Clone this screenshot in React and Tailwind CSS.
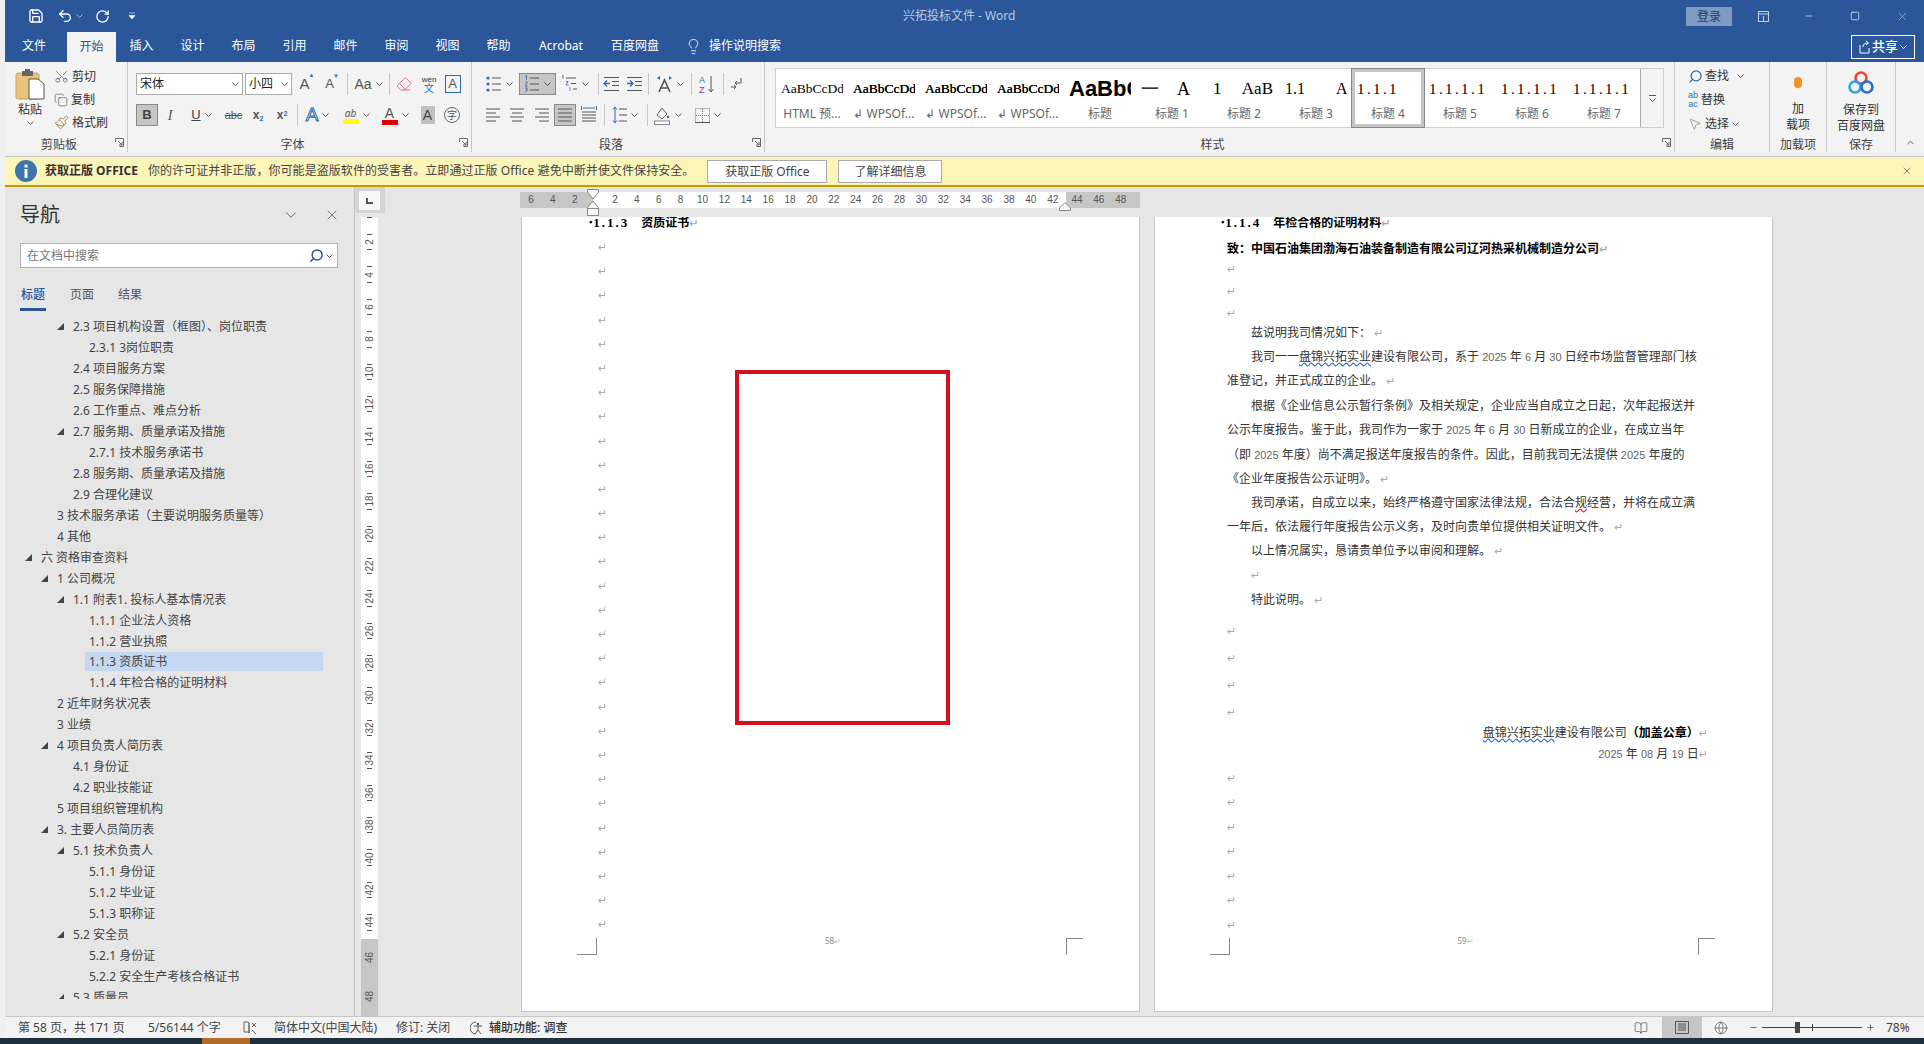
import React from 'react';
import { Save, Undo2, RotateCw, Lightbulb, Scissors, Copy, Paintbrush, ChevronDown, ChevronUp, X, Search, Minus, Plus, Square, Eraser, MousePointer2, BookOpen, Globe } from 'lucide-react';

const Chev = ({ c = 'text-[#555]' }) => (
  <svg width="7" height="4" viewBox="0 0 7 4" className={c}><path d="M0.5 0.5 L3.5 3.5 L6.5 0.5" fill="none" stroke="currentColor" strokeWidth="1" /></svg>
);
const Launcher = () => (
  <svg width="9" height="9" viewBox="0 0 9 9" className="absolute right-[3px] top-[4px] text-[#666]">
    <path d="M0.5 4V0.5H8.5V8.5H4.5M3 3L7 7M7 4V7H4" fill="none" stroke="currentColor" strokeWidth="1" />
  </svg>
);
const Sep = ({ m = 'mx-[2px]' }) => <div className={`w-px h-[22px] bg-[#c6c6c6] shrink-0 ${m}`} />;
const Cell = ({ w, sel, children }) => (
  <div className={`${w} h-[22px] shrink-0 flex items-center justify-center gap-[4px] ${sel ? 'bg-[#c6c6c6] border border-[#8a8a8a]' : ''}`}>{children}</div>
);

const Lines = ({ kind }) => {
  const rows = {
    left: ['M1 2H15', 'M1 6H11', 'M1 10H15', 'M1 14H11'],
    center: ['M1 2H15', 'M3 6H13', 'M1 10H15', 'M3 14H13'],
    right: ['M1 2H15', 'M5 6H15', 'M1 10H15', 'M5 14H15'],
    just: ['M1 2H15', 'M1 6H15', 'M1 10H15', 'M1 14H15'],
  }[kind];
  return <svg width="16" height="16" viewBox="0 0 16 16"><path d={rows.join('')} stroke="#555" fill="none" /></svg>;
};
const Bullets = () => (
  <svg width="16" height="18" viewBox="0 0 16 18"><g fill="#2b6cb0"><circle cx="2" cy="3" r="1.6" /><circle cx="2" cy="9" r="1.6" /><circle cx="2" cy="15" r="1.6" /></g><path d="M6 3H15M6 9H15M6 15H15" stroke="#555" /></svg>
);
const Numbered = () => (
  <svg width="16" height="18" viewBox="0 0 16 18"><path d="M1 1.5L2.5 .5V5M1 7H3.5L1 11H4M1 13H3.5L2 15H3.5L1 17.5" stroke="#2b6cb0" fill="none" strokeWidth=".8" /><path d="M6 3H15M6 9H15M6 15H15" stroke="#555" /></svg>
);
const Multi = () => (
  <svg width="17" height="18" viewBox="0 0 17 18"><path d="M1 1L2 .5V4M5 6.5H7L5 10H7.5M9 12V16" stroke="#2b6cb0" fill="none" strokeWidth=".8" /><path d="M5 3H15M10 8.5H15M12 14H16" stroke="#555" /></svg>
);
const Indent = ({ out }) => (
  <svg width="17" height="16" viewBox="0 0 17 16"><path d="M1 1.5H16M9 5.5H16M9 9.5H16M1 14.5H16" stroke="#555" fill="none" /><path d={out ? 'M7 7.5H1M4 4.5L1 7.5L4 10.5' : 'M1 7.5H7M4 4.5L7 7.5L4 10.5'} stroke="#2b6cb0" fill="none" strokeWidth="1.3" /></svg>
);
const TextDir = () => (
  <svg width="17" height="18" viewBox="0 0 17 18"><path d="M3 17L8.5 5L14 17M5 13H12" stroke="#555" fill="none" strokeWidth="1.6" /><path d="M1 3L4 1V5ZM16 3L13 1V5Z" fill="#2b6cb0" /></svg>
);
const Sort = () => (
  <svg width="17" height="20" viewBox="0 0 17 20"><text x="0" y="9" fontSize="9" fill="#2b6cb0" fontFamily="Liberation Sans">A</text><text x="0" y="19" fontSize="9" fill="#7b3fa0" fontFamily="Liberation Sans">Z</text><path d="M12 2V18M9.5 15L12 18L14.5 15" stroke="#555" fill="none" /></svg>
);
const ParaMark = () => (
  <svg width="14" height="16" viewBox="0 0 14 16"><path d="M11 2V7H5M7 5L5 7L7 9" stroke="#555" fill="none" /><path d="M1 11H6M4 9L6 11L4 13" stroke="#555" fill="none" /></svg>
);
const Dist = () => (
  <svg width="16" height="18" viewBox="0 0 16 18"><path d="M1 6H15M1 9H15M1 12H15M1 15H15" stroke="#555" fill="none" /><path d="M.5 0V4M15.5 0V4M2 2H14" stroke="#2b6cb0" fill="none" /></svg>
);
const Spacing = () => (
  <svg width="15" height="18" viewBox="0 0 15 18"><path d="M3 1V17M1 3.5L3 1L5 3.5M1 14.5L3 17L5 14.5" stroke="#2b6cb0" fill="none" /><path d="M7 3H15M7 9H15M7 15H15" stroke="#555" /></svg>
);
const Shading = () => (
  <svg width="17" height="19" viewBox="0 0 17 19"><path d="M3 9L8 2L13 8L8 13Z" fill="none" stroke="#666" /><circle cx="14" cy="11" r="1.2" fill="#2b6cb0" /><rect x=".5" y="15" width="15" height="3.5" fill="#fff" stroke="#888" /></svg>
);
const Borders = () => (
  <svg width="15" height="15" viewBox="0 0 15 15"><rect x=".5" y=".5" width="14" height="14" fill="none" stroke="#777" strokeDasharray="1 1" /><path d="M7.5 1V14M1 7.5H14" stroke="#777" strokeDasharray="1 1" /><path d="M0 14.5H15" stroke="#555" /></svg>
);
const Paste = () => (
  <svg width="30" height="31" viewBox="0 0 30 31">
    <rect x="1" y="4" width="23" height="26" rx="2" fill="#eac47c" stroke="#c9a25f" />
    <rect x="7" y="2" width="11" height="5" fill="#666" />
    <rect x="10" y="0" width="5" height="3" fill="#666" />
    <path d="M14 10H23L29 15V30H14Z" fill="#fff" stroke="#555" />
  </svg>
);
const G = ({ w, label, children, launcher }) => (
  <div className={`${w} shrink-0 flex flex-col border-r border-[#c6c6c6] h-[90px]`}>
    <div className="flex-1 min-h-0">{children}</div>
    <div className={`relative h-[18px] leading-[22px] text-center text-[12px] text-[#444] ${launcher ? 'pr-[14px]' : ''}`}>{label}{launcher && <Launcher />}</div>
  </div>
);

const styles = [
  ['AaBbCcDdEe', 'HTML 预...', 'text-[13.5px] font-["Liberation_Serif"]', false],
  ['AaBbCcDdEe', '↲ WPSOf...', 'text-[13.5px] font-["Liberation_Serif"] [text-shadow:0_0_0.5px_#000]'],
  ['AaBbCcDdEe', '↲ WPSOf...', 'text-[13.5px] font-["Liberation_Serif"] [text-shadow:0_0_0.5px_#000]'],
  ['AaBbCcDdEe', '↲ WPSOf...', 'text-[13.5px] font-["Liberation_Serif"] [text-shadow:0_0_0.5px_#000]'],
  ['AaBbCc', '标题', 'text-[22px] font-bold font-["Liberation_Sans"]'],
  ['一    A', '标题 1', 'text-[18px] font-["Liberation_Serif"]'],
  ['1     AaB', '标题 2', 'text-[17px] font-["Liberation_Serif"]'],
  ['1.1        A', '标题 3', 'text-[16px] font-["Liberation_Serif"]'],
  ['1.1.1', '标题 4', 'text-[15px] font-["Liberation_Serif"] tracking-[2.4px]', true],
  ['1.1.1.1', '标题 5', 'text-[15px] font-["Liberation_Serif"] tracking-[2.4px]'],
  ['1.1.1.1', '标题 6', 'text-[15px] font-["Liberation_Serif"] tracking-[2.4px]'],
  ['1.1.1.1', '标题 7', 'text-[15px] font-["Liberation_Serif"] tracking-[2.4px]'],
];

const tree = [
  [3, '2.3 项目机构设置（框图）、岗位职责', 1], [4, '2.3.1 3岗位职责'], [3, '2.4 项目服务方案'], [3, '2.5 服务保障措施'], [3, '2.6 工作重点、难点分析'],
  [3, '2.7 服务期、质量承诺及措施', 1], [4, '2.7.1 技术服务承诺书'], [3, '2.8 服务期、质量承诺及措施'], [3, '2.9 合理化建议'],
  [2, '3 技术服务承诺（主要说明服务质量等）'], [2, '4 其他'], [1, '六 资格审查资料', 1], [2, '1 公司概况', 1], [3, '1.1 附表1. 投标人基本情况表', 1],
  [4, '1.1.1 企业法人资格'], [4, '1.1.2 营业执照'], [4, '1.1.3 资质证书', 0, 1], [4, '1.1.4 年检合格的证明材料'], [2, '2 近年财务状况表'], [2, '3 业绩'],
  [2, '4 项目负责人简历表', 1], [3, '4.1 身份证'], [3, '4.2 职业技能证'], [2, '5 项目组织管理机构'], [2, '3. 主要人员简历表', 1], [3, '5.1 技术负责人', 1],
  [4, '5.1.1 身份证'], [4, '5.1.2 毕业证'], [4, '5.1.3 职称证'], [3, '5.2 安全员', 1], [4, '5.2.1 身份证'], [4, '5.2.2 安全生产考核合格证书'], [3, '5.3 质量员', 1],
];
const lvl = { 1: 'pl-[20px]', 2: 'pl-[36px]', 3: 'pl-[52px]', 4: 'pl-[68px]' };

const Mk = () => <span className="text-[11px] text-[#aaa] font-['DejaVu_Sans']">↵</span>;
const Num = ({ children }) => <span className="text-[#666] font-['Liberation_Sans'] text-[11px]">{children}</span>;

const CornerL = ({ w }) => <div className={`${w} h-[17px] mt-px border-[#888] border-r border-b`} />;
const CornerR = () => <div className="w-[17px] h-[17px] mt-px border-[#888] border-l border-t" />;

const Row = ({ m, indent, right, bold, children }) => (
  <div className={`h-[20px] leading-[20px] whitespace-nowrap ${m} ${indent ? 'pl-[24px]' : ''} ${right ? 'text-right -mr-[14px]' : ''} ${bold ? 'font-bold' : ''}`}>{children}</div>
);

const hrLeft = [6, 4, 2];
const hrRight = [2, 4, 6, 8, 10, 12, 14, 16, 18, 20, 22, 24, 26, 28, 30, 32, 34, 36, 38, 40, 42];
const hrRight2 = [44, 46, 48];
const vr = [2, 4, 6, 8, 10, 12, 14, 16, 18, 20, 22, 24, 26, 28, 30, 32, 34, 36, 38, 40, 42, 44];

export default function App() {
  return (
    <div className="w-[1924px] h-[1044px] overflow-hidden flex flex-col bg-[#f0f0f0] text-[12px] text-[#444] font-['Noto_Sans','Noto_Sans_CJK_SC',sans-serif]">
      <div className="flex-1 min-h-0 flex flex-col pl-[5px]">
        {/* title */}
        <div className="h-[62px] shrink-0 bg-[#2b579a] text-white flex flex-col">
          <div className="h-[32px] flex items-center">
            <div className="w-[898px] flex items-center pl-[22px]">
              <Save size={16} className="ml-[1px]" />
              <Undo2 size={16} className="ml-[13px]" />
              <Chev c="text-[#a9bcd8] ml-[3px]" />
              <RotateCw size={15} className="ml-[12px]" />
              <svg width="8" height="8" viewBox="0 0 8 8" className="ml-[18px]"><path d="M1 1H7M1 3.5H7L4 7Z" fill="#fff" stroke="#fff" strokeWidth=".6" /></svg>
            </div>
            <div className="text-[12px] text-[#b8c8e0] whitespace-nowrap">兴拓投标文件  -  Word</div>
            <div className="flex-1" />
            <div className="w-[46px] h-[19px] bg-[#7d9ac2] text-[12px] text-[#1f3f70] text-center leading-[19px]">登录</div>
            <div className="w-[26px]" />
            <svg width="11" height="11" viewBox="0 0 11 11" className="text-[#c8d4e6]"><path d="M.5.5H10.5V10.5H.5ZM.5 3H10.5M5.5 5V10" fill="none" stroke="currentColor" /></svg>
            <Minus size={10} className="ml-[35px] text-[#c8d4e6]" />
            <Square size={10} className="ml-[36px] text-[#c8d4e6]" />
            <X size={13} strokeWidth={1} className="ml-[36px] mr-[15px] text-[#c8d4e6]" />
          </div>
          <div className="h-[30px] flex text-[12px]">
            <div className="w-[62px] pl-[17px] leading-[28px]">文件</div>
            <div className="w-[49px] bg-[#f3f3f3] text-[#2b579a] text-center leading-[30px]">开始</div>
            {['插入', '设计', '布局', '引用', '邮件', '审阅', '视图', '帮助'].map(t => (
              <div key={t} className="w-[51px] text-center leading-[28px]">{t}</div>
            ))}
            <div className="w-[76px] text-center leading-[28px] ml-[-1px]">Acrobat</div>
            <div className="w-[72px] text-center leading-[28px]">百度网盘</div>
            <div className="flex items-center gap-[7px] ml-[14px] h-[28px]">
              <Lightbulb size={17} strokeWidth={1.2} />
              <span>操作说明搜索</span>
            </div>
            <div className="flex-1" />
            <div className="w-[64px] h-[24px] mt-[3px] mr-[9px] border border-white flex items-center justify-center gap-[2px] text-[13px] font-medium">
              <svg width="11" height="14" viewBox="0 0 11 14"><path d="M1 5V13H10V8M4 7C4 4 6 3 9 3M7 1L9.5 3L7 5" stroke="#fff" fill="none" /></svg>
              共享
              <Chev c="text-white" />
            </div>
          </div>
        </div>
        {/* ribbon */}
        <div className="h-[90px] shrink-0 bg-[#f3f3f3] flex">
          <G w="w-[123px]" label="剪贴板" launcher>
            <div className="flex h-full">
              <div className="w-[49px] flex flex-col items-center pt-[7px] pl-[1px]">
                <Paste />
                <div className="text-[12px] leading-[16px] text-[#333] mt-[2px]">粘贴</div>
                <div className="mt-[3px]"><Chev /></div>
              </div>
              <div className="flex flex-col pt-[3px] text-[12px] text-[#333]">
                <div className="h-[24px] flex items-center gap-[3px]"><Scissors size={15} strokeWidth={1.2} className="text-[#2b6cb0] -rotate-90" />剪切</div>
                <div className="h-[24px] flex items-center gap-[3px]"><Copy size={14} strokeWidth={1.1} className="text-[#555]" />复制</div>
                <div className="h-[24px] flex items-center gap-[3px]"><Paintbrush size={15} strokeWidth={1.4} className="text-[#a07b3a]" />格式刷</div>
              </div>
            </div>
          </G>
          <G w="w-[344px]" label="字体" launcher>
            <div className="pl-[8px] pt-[11px] flex flex-col gap-[9px]">
              <div className="flex items-center h-[22px]">
                <div className="w-[107px] h-[22px] bg-white border border-[#ababab] flex items-center justify-between px-[3px] text-[#222] text-[12px]">宋体<Chev /></div>
                <div className="w-[47px] h-[22px] ml-[2px] bg-white border border-[#ababab] flex items-center justify-between px-[3px] text-[#222] text-[12px]">小四<Chev /></div>
                <Cell w="w-[25px]"><span className="text-[15px] font-['Liberation_Sans'] text-[#555] relative">A<span className="absolute -right-[5px] -top-[2px] text-[6px] text-[#2b6cb0]">▲</span></span></Cell>
                <Cell w="w-[25px]"><span className="text-[13px] font-['Liberation_Sans'] text-[#555] relative">A<span className="absolute -right-[5px] -top-[2px] text-[6px] text-[#2b6cb0]">▼</span></span></Cell>
                <div className="w-[5px]" /><Sep m="" />
                <Cell w="w-[41px]"><span className="text-[14px] font-['Liberation_Sans'] text-[#555]">Aa</span><Chev /></Cell>
                <Sep m="" />
                <Cell w="w-[27px]"><Eraser size={16} strokeWidth={1.4} className="text-[#e06a7d]" /></Cell>
                <Cell w="w-[24px]"><span className="flex flex-col items-center leading-[9px] text-[#333]"><span className="text-[8px] font-['Liberation_Sans']">wén</span><span className="text-[10px] text-[#2b6cb0]">文</span></span></Cell>
                <Cell w="w-[23px]"><span className="w-[16px] h-[18px] border border-[#2b6cb0] text-[13px] leading-[16px] text-center font-['Liberation_Sans'] text-[#555]">A</span></Cell>
              </div>
              <div className="flex items-center h-[22px]">
                <Cell w="w-[22px]" sel><span className="font-bold text-[13px] font-['Liberation_Sans'] text-[#444]">B</span></Cell>
                <Cell w="w-[24px]"><span className="italic text-[14px] font-['Liberation_Serif'] text-[#555]">I</span></Cell>
                <Cell w="w-[39px]"><span className="underline text-[13px] font-['Liberation_Sans'] text-[#444]">U</span><Chev /></Cell>
                <Cell w="w-[25px]"><span className="line-through text-[11px] font-['Liberation_Sans'] text-[#555]">abc</span></Cell>
                <Cell w="w-[24px]"><span className="text-[12px] font-bold font-['Liberation_Sans'] text-[#555]">x<sub className="text-[7px] text-[#2b6cb0]">2</sub></span></Cell>
                <Cell w="w-[24px]"><span className="text-[12px] font-bold font-['Liberation_Sans'] text-[#555]">x<sup className="text-[7px] text-[#2b6cb0]">2</sup></span></Cell>
                <div className="w-[3px]" /><Sep m="" />
                <Cell w="w-[39px]"><span className="text-[19px] font-['Liberation_Sans'] text-white [-webkit-text-stroke:1px_#2b6cb0]">A</span><Chev /></Cell>
                <Cell w="w-[38px]"><span className="flex flex-col items-center"><span className="text-[10px] leading-[12px] text-[#555] italic">ab</span><span className="w-[16px] h-[5px] bg-[#ffff00]" /></span><Chev /></Cell>
                <Cell w="w-[40px]"><span className="flex flex-col items-center"><span className="text-[14px] leading-[14px] text-[#555] font-['Liberation_Sans']">A</span><span className="w-[16px] h-[5px] bg-[#e00000]" /></span><Chev /></Cell>
                <Cell w="w-[25px]"><span className="w-[14px] h-[18px] bg-[#c0c0c0] text-[14px] leading-[18px] text-center font-['Liberation_Sans'] text-[#444]">A</span></Cell>
                <Cell w="w-[24px]"><span className="w-[16px] h-[16px] rounded-full border border-[#666] text-[10px] leading-[14px] text-center text-[#555]">字</span></Cell>
              </div>
            </div>
          </G>
          <G w="w-[293px]" label="段落" launcher>
            <div className="pl-[8px] pt-[11px] flex flex-col gap-[9px]">
              <div className="flex items-center h-[22px]">
                <Cell w="w-[39px]"><Bullets /><Chev /></Cell>
                <Cell w="w-[37px]" sel><Numbered /><Chev /></Cell>
                <Cell w="w-[38px]"><Multi /><Chev /></Cell>
                <div className="w-[4px]" /><Sep m="" />
                <Cell w="w-[24px]"><Indent out /></Cell>
                <Cell w="w-[23px]"><Indent /></Cell>
                <div className="w-[2px]" /><Sep m="" />
                <Cell w="w-[42px]"><TextDir /><Chev /></Cell>
                <Sep m="" />
                <Cell w="w-[31px]"><Sort /></Cell>
                <Sep m="" />
                <Cell w="w-[25px]"><ParaMark /></Cell>
              </div>
              <div className="flex items-center h-[22px]">
                <Cell w="w-[25px]"><Lines kind="left" /></Cell>
                <Cell w="w-[24px]"><Lines kind="center" /></Cell>
                <Cell w="w-[25px]"><Lines kind="right" /></Cell>
                <Cell w="w-[22px]" sel><Lines kind="just" /></Cell>
                <Cell w="w-[25px]"><Dist /></Cell>
                <div className="w-[3px]" /><Sep m="" />
                <Cell w="w-[40px]"><Spacing /><Chev /></Cell>
                <div className="w-[2px]" /><Sep m="" />
                <Cell w="w-[40px]"><Shading /><Chev /></Cell>
                <Cell w="w-[40px]"><Borders /><Chev /></Cell>
              </div>
            </div>
          </G>
          <G w="w-[910px]" label="样式" launcher>
            <div className="pt-[6px] pl-[10px] flex">
              <div className="h-[60px] w-[889px] bg-white border border-[#d0d0d0] flex">
                {styles.map((s, i) => (
                  <div key={i} className={`w-[72px] shrink-0 h-full flex flex-col items-center overflow-hidden ${s[3] ? 'border-[3px] border-[#c6c6c6] outline outline-1 outline-[#888] pt-px' : 'pt-[4px]'}`}>
                    <div className={`h-[32px] leading-[32px] w-[62px] shrink-0 text-left overflow-hidden whitespace-pre text-black ${s[2]}`}>{s[0]}</div>
                    <div className="text-[12px] leading-[18px] text-[#666] whitespace-nowrap">{s[1]}</div>
                  </div>
                ))}
                <div className="flex-1 border-l border-[#aaa] flex flex-col items-center justify-center gap-[2px] bg-[#f3f3f3]">
                  <div className="w-[7px] h-px bg-[#555]" />
                  <Chev />
                </div>
              </div>
            </div>
          </G>
          <G w="w-[95px]" label="编辑">
            <div className="pl-[13px] pt-[2px] flex flex-col text-[12px] text-[#333]">
              <div className="h-[24px] flex items-center gap-[2px]"><Search size={15} strokeWidth={2} className="text-[#2b6cb0] -scale-x-100" />查找<span className="ml-[6px]"><Chev /></span></div>
              <div className="h-[24px] flex items-center gap-[3px]"><span className="text-[9px] leading-[9px] text-[#2b6cb0] font-['Liberation_Sans'] text-center">ab<br />ac</span>替换</div>
              <div className="h-[24px] flex items-center gap-[3px]"><MousePointer2 size={14} strokeWidth={1.1} className="text-[#777]" />选择<Chev /></div>
            </div>
          </G>
          <G w="w-[57px]" label="加载项">
            <div className="flex flex-col items-center pt-[15px] text-[12px] leading-[16px] text-[#333]">
              <div className="w-[8px] h-[11px] rounded-full bg-[#f7941d] mb-[13px]" />
              <div>加</div>
              <div>载项</div>
            </div>
          </G>
          <G w="w-[69px]" label="保存">
            <div className="flex flex-col items-center pt-[9px] text-[12px] leading-[16px] text-[#333]">
              <svg width="26" height="24" viewBox="0 0 26 24" className="mb-[7px]">
                <circle cx="13" cy="7" r="5.5" fill="none" stroke="#e8452c" strokeWidth="2.6" />
                <circle cx="7" cy="16" r="5.5" fill="none" stroke="#2aa5e8" strokeWidth="2.6" />
                <circle cx="19" cy="16" r="5.5" fill="none" stroke="#2470d8" strokeWidth="2.6" />
              </svg>
              <div>保存到</div>
              <div>百度网盘</div>
            </div>
          </G>
          <div className="flex-1 flex items-end justify-center pb-[4px]"><ChevronUp size={11} className="text-[#555]" /></div>
        </div>
        {/* notice */}
        <div className="h-[5px] shrink-0 bg-[#f0f0f0] border-b border-[#c6c6c6]" />
        <div className="h-[30px] shrink-0 bg-[#fcf5b8] border-b-2 border-[#c49a00] flex items-center text-[12px] text-[#444] pl-[10px] pr-[11px]">
          <svg width="22" height="22" viewBox="0 0 22 22"><circle cx="11" cy="11" r="11" fill="#3e75ac" /><rect x="9.5" y="9" width="3" height="9" fill="#fff" /><rect x="9.5" y="4.5" width="3" height="3" fill="#fff" /></svg>
          <span className="ml-[8px] font-bold text-[#333] whitespace-nowrap">获取正版 OFFICE</span>
          <span className="ml-[10px] whitespace-nowrap tracking-[0.06px]">你的许可证并非正版，你可能是盗版软件的受害者。立即通过正版 Office 避免中断并使文件保持安全。</span>
          <div className="ml-[13px] w-[120px] h-[23px] bg-white border border-[#aaa] text-center leading-[21px]">获取正版 Office</div>
          <div className="ml-[11px] w-[104px] h-[23px] bg-white border border-[#aaa] text-center leading-[21px]">了解详细信息</div>
          <div className="flex-1" />
          <X size={12} strokeWidth={1.3} className="text-[#555]" />
        </div>
        {/* main */}
        <div className="flex-1 min-h-0 flex bg-[#e6e6e6]">
          {/* nav */}
          <div className="w-[350px] shrink-0 flex flex-col border-r border-[#c6c6c6] overflow-hidden">
            <div className="h-[56px] shrink-0 pl-[15px] pr-[14px] flex items-center justify-between text-[#444]">
              <span className="text-[20px] text-[#333]">导航</span>
              <div className="flex items-center gap-[24px]"><ChevronDown size={18} strokeWidth={1} /><X size={16} strokeWidth={1} /></div>
            </div>
            <div className="ml-[15px] w-[318px] h-[25px] shrink-0 bg-white border border-[#b0b0b0] flex items-center justify-between pl-[6px] pr-[4px] text-[#777]">
              在文档中搜索
              <span className="flex items-center gap-[2px]"><Search size={15} strokeWidth={2.4} className="text-[#2b579a] -scale-x-100" /><Chev /></span>
            </div>
            <div className="h-[26px] shrink-0 ml-[15px] mt-[18px] flex gap-[24px] text-[12px] text-[#555]">
              <div className="w-[26px] h-[25px] pl-[1px] border-b-[3px] border-[#2b579a] font-medium text-[#2b579a] leading-[18px] whitespace-nowrap">标题</div>
              <div className="leading-[18px]">页面</div>
              <div className="leading-[18px]">结果</div>
            </div>
            <div className="mt-[4px] h-[683px] overflow-hidden shrink-0">
              {tree.map(([l, t, arrow, sel], i) => (
                <div key={i} className={`h-[20.98px] flex items-center pr-[31px] ${lvl[l]} text-[12px] text-[#444]`}>
                  <div className="w-[12px] shrink-0">
                    {arrow ? <svg width="7" height="7" viewBox="0 0 7 7"><path d="M7 0V7H0Z" fill="#444" /></svg> : null}
                  </div>
                  <div className={`flex-1 pl-[4px] h-[19px] leading-[19px] whitespace-nowrap ${sel ? 'bg-[#c5d8f1]' : ''}`}>{t}</div>
                </div>
              ))}
            </div>
          </div>
          {/* vertical ruler */}
          <div className="w-[30px] shrink-0 flex flex-col">
            <div className="h-[26px] shrink-0 bg-[#d4d4d4] p-[4px]">
              <div className="w-[21px] h-[19px] bg-[#f7f7f7] flex items-center justify-center">
                <svg width="7" height="6" viewBox="0 0 7 6"><path d="M1 0V5H7" stroke="#555" strokeWidth="2" fill="none" /></svg>
              </div>
            </div>
            <div className="mt-[4px] ml-[6px] w-[17px] flex-1 flex flex-col">
              <div className="bg-white">
                <div className="h-[9px] flex justify-center"><div className="w-[5px] h-px bg-[#555]" /></div>
                {vr.map(n => (
                  <div key={n} className="h-[32.4px] py-[8px] flex flex-col items-center justify-between">
                    <div className="w-[5px] h-px bg-[#555]" />
                    <div className="text-[10px] leading-[10px] text-[#555] -rotate-90 font-['Liberation_Sans'] whitespace-nowrap">{n}</div>
                    <div className="w-[5px] h-px bg-[#555]" />
                  </div>
                ))}
              </div>
              <div className="flex-1 bg-[#c6c6c6] flex flex-col items-center justify-around">
                {[46, 48].map(n => <div key={n} className="text-[10px] text-[#555] -rotate-90 font-['Liberation_Sans']">{n}</div>)}
              </div>
            </div>
          </div>
          {/* document */}
          <div className="flex-1 min-w-0 flex flex-col">
            <div className="h-[30px] shrink-0 pl-[135px] pt-[5px]">
              <div className="relative w-[620px] h-[16px] flex text-[10px] leading-[16px] text-[#555] font-['Liberation_Sans'] text-center">
                <div className="w-[73px] bg-[#c6c6c6] flex shrink-0">
                  {hrLeft.map(n => <div key={n} className="w-[21.9px] shrink-0">{n}</div>)}
                </div>
                <div className="w-[473px] bg-white flex shrink-0 pl-[11px]">
                  {hrRight.map(n => <div key={n} className="w-[21.9px] shrink-0">{n}</div>)}
                </div>
                <div className="w-[74px] bg-[#c6c6c6] flex shrink-0">
                  {hrRight2.map(n => <div key={n} className="w-[21.9px] shrink-0">{n}</div>)}
                </div>
                <svg width="12" height="28" viewBox="0 0 12 28" className="absolute left-[67px] -top-[3px]"><path d="M.5.5H11.5V3L6 10L.5 3ZM6 12L11.5 18.5V26.5H.5V18.5ZM.5 19.5H11.5" fill="#f6f6f6" stroke="#888" /></svg>
                <svg width="12" height="9" viewBox="0 0 12 9" className="absolute left-[539px] top-[10px]"><path d="M6 .5L11.5 6V8.5H.5V6Z" fill="#f6f6f6" stroke="#888" /></svg>
              </div>
            </div>
            <div className="flex-1 min-h-0 pl-[136px] flex gap-[14px] pb-[4px]">
              {/* page 58 */}
              <div className="relative w-[619px] h-[795px] bg-white border-x border-b border-[#c6c6c6] overflow-hidden flex flex-col pl-[67px] text-[#222]">
                <div className="-mt-[5px] h-[20px] leading-[20px] whitespace-nowrap text-[12px] font-bold text-black font-['Liberation_Serif','Noto_Sans_CJK_SC',serif]">
                  <span className="text-[9px] mr-[1px] align-[2px]">▪</span><span className="tracking-[2px] text-[13px]">1.1.3</span><span className="ml-[12px]">资质证书</span><Mk />
                </div>
                <div className="mt-[3px] flex flex-col pl-[9px]">
                  {Array.from({ length: 29 }, (_, i) => <div key={i} className="h-[24.2px] leading-[24px]"><Mk /></div>)}
                </div>
                <div className="flex-1" />
                <div className="flex items-start justify-between h-[18px] mb-[56px] pr-[56px] -ml-[12px] text-[8px] text-[#888]">
                  <CornerL w="w-[20px]" />
                  <span className="mt-[-2px] ml-[3px]">58<span className="text-[#bbb]">↵</span></span>
                  <CornerR />
                </div>
                <div className="absolute left-[213px] top-[153px] w-[215px] h-[355px] border-[4px] border-[#d40f20]" />
              </div>
              {/* page 59 */}
              <div className="w-[619px] h-[795px] bg-white border-x border-b border-[#c6c6c6] overflow-hidden flex flex-col pl-[72px] text-[12px] text-[#333]">
                <div className="w-[467px] flex flex-col">
                  <div className="-mt-[5px] h-[20px] leading-[20px] whitespace-nowrap font-bold text-black font-['Liberation_Serif','Noto_Sans_CJK_SC',serif] -ml-[6px]">
                    <span className="text-[9px] mr-[1px] align-[2px]">▪</span><span className="tracking-[2px] text-[13px]">1.1.4</span><span className="ml-[12px]">年检合格的证明材料</span><Mk />
                  </div>
                  <Row m="mt-[7px]" bold><span className="text-black">致：中国石油集团渤海石油装备制造有限公司辽河热采机械制造分公司</span><Mk /></Row>
                  <Row m="mt-0"><Mk /></Row>
                  <Row m="mt-[2px]"><Mk /></Row>
                  <Row m="mt-[2px]"><Mk /></Row>
                  <Row m="mt-0" indent>兹说明我司情况如下： <Mk /></Row>
                  <Row m="mt-[4px]" indent>我司一一<span className="underline decoration-wavy decoration-[#2b6cd0]">盘锦兴拓实业</span>建设有限公司，系于 <Num>2025</Num> 年 <Num>6</Num> 月 <Num>30</Num> 日经市场监督管理部门核</Row>
                  <Row m="mt-[4px]">准登记，并正式成立的企业。 <Mk /></Row>
                  <Row m="mt-[5px]" indent>根据《企业信息公示暂行条例》及相关规定，企业应当自成立之日起，次年起报送并</Row>
                  <Row m="mt-[4px]">公示年度报告。鉴于此，我司作为一家于 <Num>2025</Num> 年 <Num>6</Num> 月 <Num>30</Num> 日新成立的企业，在成立当年</Row>
                  <Row m="mt-[5px]">（即 <Num>2025</Num> 年度）尚不满足报送年度报告的条件。因此，目前我司无法提供 <Num>2025</Num> 年度的</Row>
                  <Row m="mt-[4px]">《企业年度报告公示证明》。 <Mk /></Row>
                  <Row m="mt-[4px]" indent>我司承诺，自成立以来，始终严格遵守国家法律法规，合法合<span className="underline decoration-wavy decoration-[#e02020]">规</span>经营，并将在成立满</Row>
                  <Row m="mt-[4px]">一年后，依法履行年度报告公示义务，及时向贵单位提供相关证明文件。 <Mk /></Row>
                  <Row m="mt-[4px]" indent>以上情况属实，恳请贵单位予以审阅和理解。 <Mk /></Row>
                  <Row m="mt-[4px]" indent><Mk /></Row>
                  <Row m="mt-[5px]" indent>特此说明。 <Mk /></Row>
                  <Row m="mt-[11px]"><Mk /></Row>
                  <Row m="mt-[7px]"><Mk /></Row>
                  <Row m="mt-[7px]"><Mk /></Row>
                  <Row m="mt-[7px]"><Mk /></Row>
                  <Row m="mt-px" right><span className="underline decoration-wavy decoration-[#2b6cd0]">盘锦兴拓实业</span>建设有限公司<span className="font-bold text-black">（加盖公章）</span><Mk /></Row>
                  <Row m="mt-px" right><Num>2025</Num> 年 <Num>08</Num> 月 <Num>19</Num> 日<Mk /></Row>
                  <Row m="mt-[4px]"><Mk /></Row>
                  <Row m="mt-[4px]"><Mk /></Row>
                  <Row m="mt-[5px]"><Mk /></Row>
                  <Row m="mt-[4px]"><Mk /></Row>
                  <Row m="mt-[5px]"><Mk /></Row>
                  <Row m="mt-[4px]"><Mk /></Row>
                  <Row m="mt-[5px]"><Mk /></Row>
                </div>
                <div className="flex-1" />
                <div className="flex items-start justify-between h-[18px] mb-[56px] pr-[57px] -ml-[17px] text-[8px] text-[#888]">
                  <CornerL w="w-[20px]" />
                  <span className="mt-[-2px] ml-[3px]">59<span className="text-[#bbb]">↵</span></span>
                  <CornerR />
                </div>
              </div>
            </div>
          </div>
        </div>
        {/* status */}
        <div className="h-[22px] shrink-0 bg-[#f3f3f3] border-t border-[#c6c6c6] flex items-center text-[12px] text-[#444] whitespace-nowrap">
          <span className="ml-[13px] w-[130px]">第 58 页，共 171 页</span>
          <span className="w-[95px]">5/56144 个字</span>
          <svg width="14" height="13" viewBox="0 0 14 13"><path d="M1 1H5L6 2V12L5 11H1ZM6 2V12" fill="none" stroke="#666" /><path d="M9 2L13 6M13 2L9 6M9 9L13 13" stroke="#666" /></svg>
          <span className="ml-[17px] w-[122px]">简体中文(中国大陆)</span>
          <span className="w-[74px]">修订: 关闭</span>
          <svg width="16" height="14" viewBox="0 0 16 14"><path d="M6 1A6 6 0 0 0 6 13" fill="none" stroke="#555" /><circle cx="8" cy="3" r="1.2" fill="#555" /><path d="M4 5H12M8 5V9L5 13M8 9L11 13" stroke="#555" fill="none" /></svg>
          <span className="ml-[3px] font-medium text-[#333]">辅助功能: 调查</span>
          <div className="flex-1" />
          <BookOpen size={14} strokeWidth={1.2} className="text-[#555] mr-[14px]" />
          <div className="w-[40px] h-[21px] bg-[#c6c6c6] flex items-center justify-center"><svg width="14" height="13" viewBox="0 0 14 13"><path d="M.5.5H13.5V12.5H.5ZM3 3H11M3 5H11M3 7H11M3 9H11" fill="none" stroke="#555" /></svg></div>
          <Globe size={14} strokeWidth={1.2} className="text-[#555] ml-[12px] mr-[21px]" />
          <Minus size={9} className="text-[#444]" />
          <div className="relative w-[100px] h-px bg-[#444] mx-[4px]">
            <div className="absolute left-[33px] -top-[5px] w-[5px] h-[11px] bg-[#444]" />
            <div className="absolute left-[50px] -top-[3px] w-px h-[7px] bg-[#444]" />
          </div>
          <Plus size={9} className="text-[#444]" />
          <span className="ml-[11px] w-[26px] mr-[12px] text-[12px]">78%</span>
        </div>
      </div>
      {/* taskbar */}
      <div className="h-[6px] shrink-0 bg-[#1f2f3c] flex">
        <div className="ml-[202px] w-[48px] bg-[#b5692a]" />
      </div>
    </div>
  );
}
